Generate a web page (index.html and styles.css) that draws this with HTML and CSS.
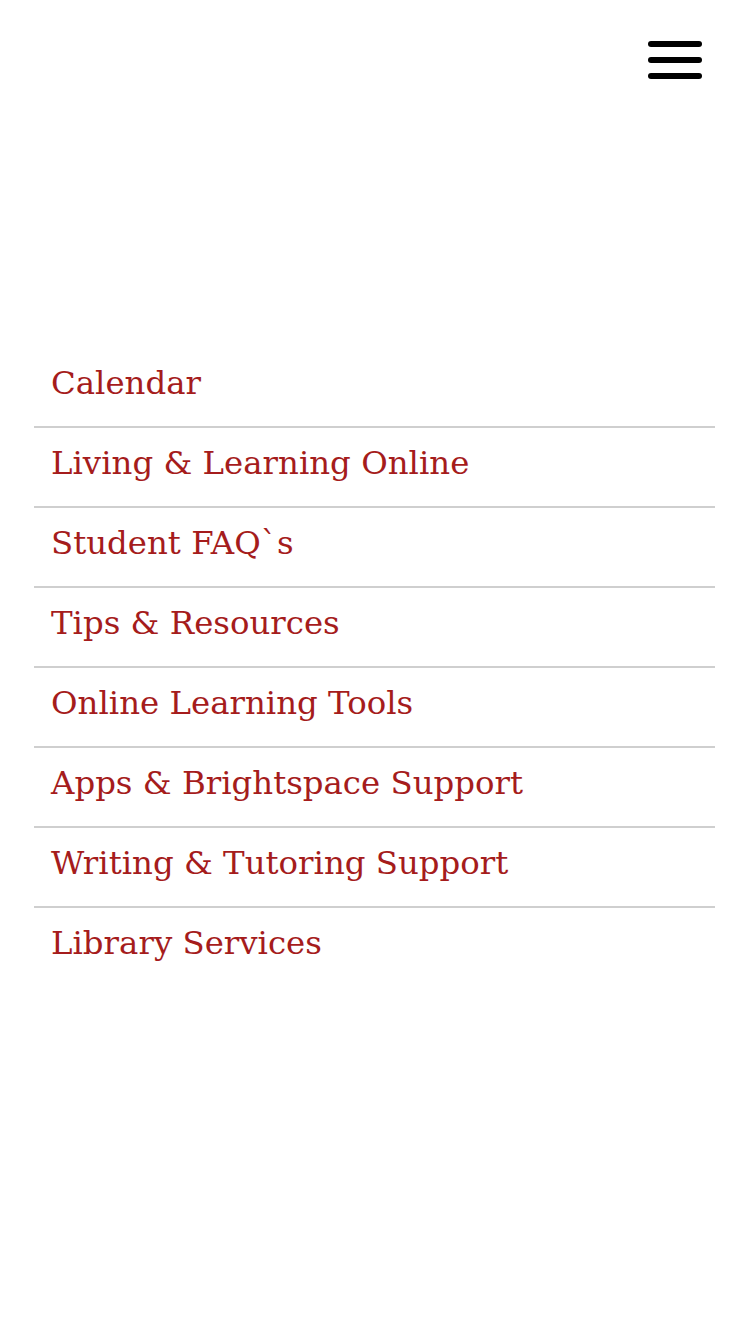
FILE: index.html
```html
<!DOCTYPE html>
<html>
<head>
<meta charset="utf-8">
<link rel="stylesheet" href="styles.css">
</head>
<body>
<header class="top">
  <button class="burger" aria-label="Menu">
    <svg width="56" height="40" viewBox="0 0 56 40">
      <rect x="1" y="1" width="54" height="6" rx="3" fill="#000"/>
      <rect x="1" y="17" width="54" height="6" rx="3" fill="#000"/>
      <rect x="1" y="33" width="54" height="6" rx="3" fill="#000"/>
    </svg>
  </button>
</header>
<nav class="menu">
  <ul class="list">
    <li class="item"><a href="#">Calendar</a></li>
    <li class="item"><a href="#">Living &amp; Learning Online</a></li>
    <li class="item"><a href="#">Student FAQ`s</a></li>
    <li class="item"><a href="#">Tips &amp; Resources</a></li>
    <li class="item"><a href="#">Online Learning Tools</a></li>
    <li class="item"><a href="#">Apps &amp; Brightspace Support</a></li>
    <li class="item"><a href="#">Writing &amp; Tutoring Support</a></li>
    <li class="item"><a href="#">Library Services</a></li>
  </ul>
</nav>
</body>
</html>
```
FILE: styles.css
```css
html, body {
  margin: 0;
  padding: 0;
  background: #fff;
}
body {
  width: 750px;
  height: 1334px;
  overflow: hidden;
  font-family: "DejaVu Serif", "Liberation Serif", serif;
}
.top {
  display: flex;
  justify-content: flex-end;
  align-items: flex-start;
  padding: 40px 47px 0 0;
  height: 348px;
  box-sizing: border-box;
}
.burger {
  border: 0;
  background: none;
  padding: 0;
  margin: 0;
  width: 56px;
  height: 40px;
  display: block;
}
.burger svg { display: block; }
.menu {
  padding: 0 35px 0 34px;
}
.list {
  list-style: none;
  margin: 0;
  padding: 0;
}
.item {
  padding: 15px 0 23px 17px;
  border-bottom: 2px solid #cfcfcf;
}
.item:last-child { border-bottom: 0; }
.item a {
  display: block;
  color: #a51c1c;
  text-decoration: none;
  font-size: 32.4px;
  line-height: 40px;
  white-space: nowrap;
}
```
